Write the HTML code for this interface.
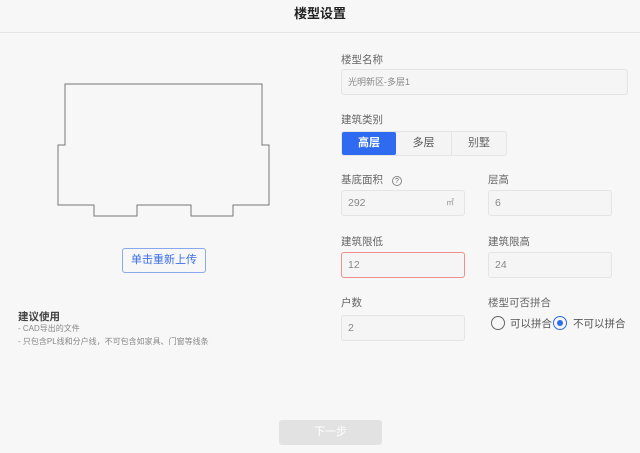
<!DOCTYPE html>
<html><head><meta charset="utf-8"><style>
*{box-sizing:border-box;margin:0;padding:0}
body{width:640px;height:453px;background:#f7f7f7;font-family:"Liberation Sans","Noto Sans CJK SC",sans-serif;position:relative;overflow:hidden;color:#333}
.a{position:absolute}
.lbl{font-size:10.5px;color:#666}
.inp{position:absolute;height:26px;border:1px solid #e4e4e4;border-radius:3px;background:#f5f5f5;font-size:10.5px;color:#888;padding:0 6px;line-height:24px}
</style></head><body>
<div class="a" style="left:0;top:0;width:640px;height:33px;border-bottom:1px solid #e5e5e5;text-align:center;line-height:28px;font-size:13px;font-weight:bold;color:#222">楼型设置</div>
<svg class="a" style="left:0;top:0" width="320" height="240"><path d="M65 84 H262 V145 H269 V205 H233 V216 H191 V205 H137 V216 H94 V205 H58 V145 H65 Z" fill="none" stroke="#777" stroke-width="1"/></svg>
<div class="a" style="left:122px;top:248px;width:84px;height:25px;border:1px solid #8aa8ee;border-radius:3px;color:#3b6fe8;font-size:11px;text-align:center;line-height:23px">单击重新上传</div>
<div class="a" style="left:18px;top:309px;font-size:10.5px;font-weight:bold;color:#444">建议使用</div>
<div class="a" style="left:18px;top:322px;font-size:8px;color:#888;line-height:13px">- CAD导出的文件<br>- 只包含PL线和分户线，不可包含如家具、门窗等线条</div>
<div class="a lbl" style="left:341px;top:52px">楼型名称</div>
<div class="inp" style="left:341px;top:69px;width:287px;font-size:9px">光明新区-多层1</div>
<div class="a lbl" style="left:341px;top:112px">建筑类别</div>
<div class="a" style="left:341px;top:131px;width:166px;height:25px;border:1px solid #e5e5e5;border-radius:3px;display:flex;font-size:11px;background:#f4f4f4">
<div style="width:54px;background:#2f6bf0;color:#fff;font-weight:bold;text-align:center;line-height:23px;border-radius:2px">高层</div>
<div style="width:56px;text-align:center;line-height:23px;color:#555;border-right:1px solid #e5e5e5">多层</div>
<div style="flex:1;text-align:center;line-height:23px;color:#666">别墅</div></div>
<div class="a lbl" style="left:341px;top:172px">基底面积 <span style="display:inline-block;width:10px;height:10px;border:1px solid #888;border-radius:50%;font-size:7px;text-align:center;line-height:9px;margin-left:6px">?</span></div>
<div class="inp" style="left:341px;top:190px;width:124px">292<span style="position:absolute;right:10px;font-size:8px;color:#999">㎡</span></div>
<div class="a lbl" style="left:488px;top:172px">层高</div>
<div class="inp" style="left:488px;top:190px;width:124px">6</div>
<div class="a lbl" style="left:341px;top:234px">建筑限低</div>
<div class="inp" style="left:341px;top:252px;width:124px;border-color:#ef8f8f">12</div>
<div class="a lbl" style="left:488px;top:234px">建筑限高</div>
<div class="inp" style="left:488px;top:252px;width:124px">24</div>
<div class="a lbl" style="left:341px;top:295px">户数</div>
<div class="inp" style="left:341px;top:315px;width:124px">2</div>
<div class="a lbl" style="left:488px;top:295px">楼型可否拼合</div>
<div class="a" style="left:491px;top:316px;width:14px;height:14px;border:1.5px solid #666;border-radius:50%"></div>
<div class="a" style="left:510px;top:316px;font-size:10.5px;color:#555">可以拼合</div>
<div class="a" style="left:553px;top:316px;width:14px;height:14px;border:1.5px solid #2f6bf0;border-radius:50%"><div style="margin:2.5px;width:6px;height:6px;border-radius:50%;background:#2f6bf0"></div></div>
<div class="a" style="left:573px;top:316px;font-size:10.5px;color:#555">不可以拼合</div>
<div class="a" style="left:279px;top:420px;width:103px;height:25px;background:#e2e2e2;border-radius:3px;color:#fff;font-size:11px;text-align:center;line-height:25px">下一步</div>
</body></html>
